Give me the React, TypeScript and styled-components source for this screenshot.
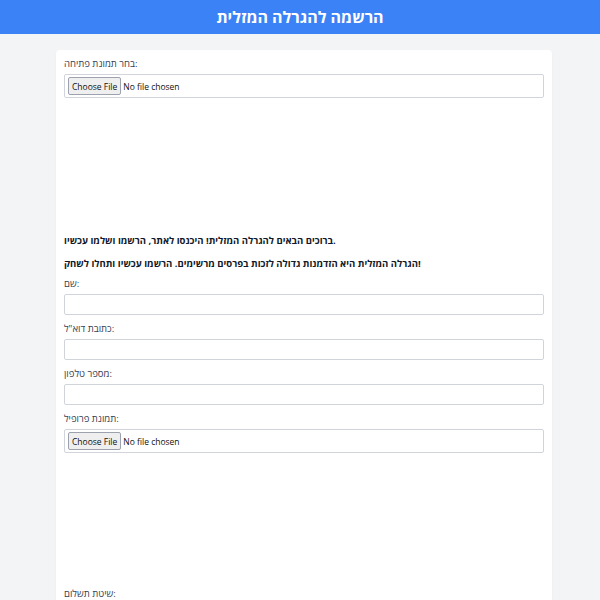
import React from "react";
import styled, { createGlobalStyle } from "styled-components";

const Global = createGlobalStyle`
  html, body { margin: 0; padding: 0; }
  body {
    background: #f3f4f6;
    font-family: "Open Sans", "Noto Sans", Arial, sans-serif;
    color: #1f2937;
  }
`;

const Header = styled.header`
  background: #3b82f6;
  color: #ffffff;
  height: 34px;
  display: flex;
  align-items: center;
  justify-content: center;
`;

const Title = styled.h1`
  margin: 0;
  font-size: 16px;
  font-weight: 700;
`;

const Page = styled.div`
  padding: 16px 0 0 8px;
`;

const Card = styled.main`
  width: 480px;
  margin: 0 auto;
  background: #ffffff;
  border-radius: 4px;
  box-shadow: 0 1px 2px rgba(0, 0, 0, 0.06);
  padding: 7px 8px 0;
  display: flex;
  flex-direction: column;
`;

const Label = styled.label`
  font-size: 9.5px;
  line-height: 14px;
  color: #374151;
  margin-bottom: 3px;
`;

const Field = styled.input<{ $file?: boolean }>`
  box-sizing: border-box;
  width: 100%;
  height: ${(p) => (p.$file ? "24px" : "21px")};
  border: 1px solid #d1d5db;
  border-radius: 2px;
  padding: ${(p) => (p.$file ? "2px 3px" : "2px 6px")};
  font-family: "Open Sans", "Noto Sans", Arial, sans-serif;
  font-size: 8.5px;
  color: #111;
  margin-bottom: 7px;
  background: #fff;
  &::file-selector-button {
    font-family: inherit;
    font-size: 8.5px;
    padding: 0 3px;
    margin-right: 2px;
    height: 18px;
    border: 1px solid #9ca3af;
    border-radius: 2px;
    background: #efefef;
    color: #111;
  }
`;

const Preview = styled.div<{ $h: number }>`
  height: ${(p) => p.$h}px;
`;

const Lead = styled.p<{ $gap: number }>`
  margin: 0 0 ${(p) => p.$gap}px;
  font-size: 9.5px;
  line-height: 14px;
  font-weight: 700;
  color: #111827;
`;

export default function App() {
  return (
    <>
      <Global />
      <Header>
        <Title>הרשמה להגרלה המזלית</Title>
      </Header>
      <Page>
        <Card>
          <Label>בחר תמונת פתיחה:</Label>
          <Field type="file" $file />
          <Preview $h={129} />
          <Lead $gap={9}>ברוכים הבאים להגרלה המזלית! היכנסו לאתר, הרשמו ושלמו עכשיו.</Lead>
          <Lead $gap={6}>הגרלה המזלית היא הזדמנות גדולה לזכות בפרסים מרשימים. הרשמו עכשיו ותחלו לשחק!</Lead>
          <Label>שם:</Label>
          <Field type="text" />
          <Label>כתובת דוא"ל:</Label>
          <Field type="email" />
          <Label>מספר טלפון:</Label>
          <Field type="tel" />
          <Label>תמונת פרופיל:</Label>
          <Field type="file" $file />
          <Preview $h={127} />
          <Label>שיטת תשלום:</Label>
        </Card>
      </Page>
    </>
  );
}
